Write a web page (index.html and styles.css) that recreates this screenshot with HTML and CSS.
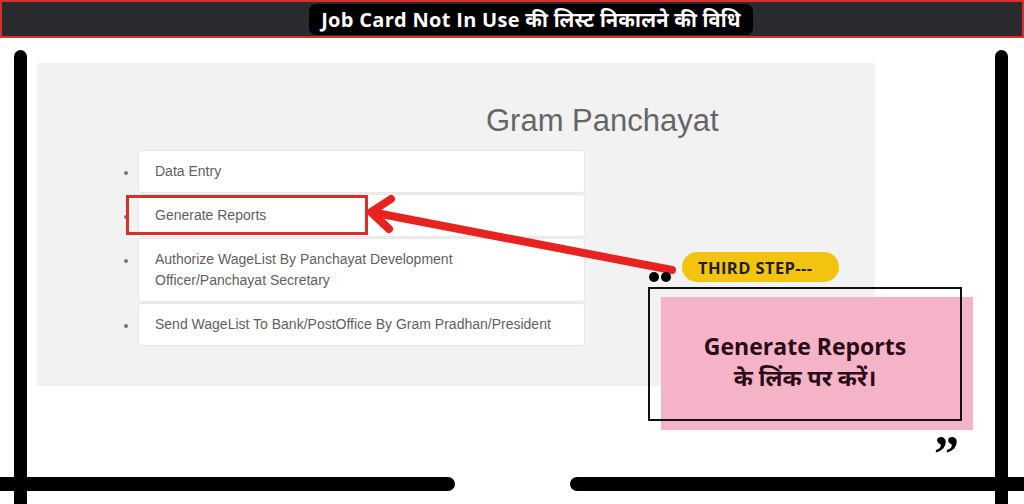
FILE: index.html
```html
<!DOCTYPE html>
<html lang="hi">
<head>
<meta charset="utf-8">
<title>Job Card Not In Use</title>
<link rel="stylesheet" href="styles.css">
</head>
<body>
<header class="topbar">
  <h1 class="title-pill">Job Card Not In Use की लिस्ट निकालने की विधि</h1>
</header>
<main class="stage">
  <section class="panel">
    <h2 class="panel-title">Gram Panchayat</h2>
    <ul class="menu">
      <li class="menu-item">Data Entry</li>
      <li class="menu-item">Generate Reports</li>
      <li class="menu-item">Authorize WageList By Panchayat Development<br>Officer/Panchayat Secretary</li>
      <li class="menu-item">Send WageList To Bank/PostOffice By Gram Pradhan/President</li>
    </ul>
  </section>
</main>

<div class="frame frame-left"></div>
<div class="frame frame-right"></div>
<div class="frame frame-bottom-left"></div>
<div class="frame frame-bottom-right"></div>

<div class="highlight"></div>

<svg class="arrow" width="1024" height="504" viewBox="0 0 1024 504" aria-hidden="true">
  <g stroke="#e8231f" stroke-width="8" stroke-linecap="round" stroke-linejoin="round" fill="none">
    <line x1="672" y1="270" x2="376" y2="213"/>
    <polyline points="391,199 371,212 389,229"/>
  </g>
  <circle cx="654" cy="277" r="5" fill="#000"/>
  <circle cx="666" cy="277" r="5" fill="#000"/>
</svg>

<div class="step-pill">THIRD STEP---</div>

<div class="callout-bg"></div>
<div class="callout">
  <p class="callout-text">Generate Reports<br>के लिंक पर करें।</p>
</div>
<span class="close-quote">”</span>
</body>
</html>
```

FILE: styles.css
```css
html, body {
  margin: 0;
  padding: 0;
}
body {
  width: 1024px;
  height: 504px;
  overflow: hidden;
  position: relative;
  background: #ffffff;
  font-family: "Liberation Sans", Arial, sans-serif;
}

.topbar {
  box-sizing: border-box;
  height: 38px;
  background: #2b2b2f;
  border: 2px solid #d8312d;
  display: flex;
  align-items: center;
  justify-content: center;
  padding-left: 38px;
}
.title-pill {
  margin: 0;
  height: 31px;
  display: flex;
  align-items: center;
  padding: 0 12px;
  background: #000000;
  border-radius: 7px;
  color: #ffffff;
  font-family: "Open Sans", "Noto Sans", "Noto Sans Devanagari", sans-serif;
  font-weight: 700;
  font-size: 20px;
  letter-spacing: 0.3px;
  white-space: nowrap;
}

.stage {
  padding-top: 25px;
}
.panel {
  margin-left: 37px;
  width: 838px;
  height: 323px;
  background: #f2f2f3;
  box-sizing: border-box;
  padding-top: 40px;
}
.panel-title {
  margin: 0;
  padding-left: 449px;
  font-weight: 400;
  font-size: 31px;
  line-height: 36px;
  color: #666666;
}
.menu {
  margin: 11px 0 0;
  padding: 0 0 0 101px;
  list-style: disc outside;
  color: #666666;
}
.menu-item {
  box-sizing: border-box;
  width: 447px;
  margin-bottom: 1px;
  padding: 10px 12px 10px 16px;
  background: #ffffff;
  border: 1px solid #e6e6e6;
  border-radius: 3px;
  font-size: 14px;
  line-height: 21px;
  color: #5f5f5f;
}
.menu-item::marker {
  color: #777777;
  font-size: 12px;
}

.frame {
  position: absolute;
  background: #000000;
}
.frame-left {
  left: 14px;
  top: 50px;
  width: 13px;
  height: 470px;
  border-radius: 7px 7px 0 0;
}
.frame-right {
  left: 995px;
  top: 50px;
  width: 13px;
  height: 470px;
  border-radius: 7px 7px 0 0;
}
.frame-bottom-left {
  left: 0;
  top: 477px;
  width: 455px;
  height: 14px;
  border-radius: 0 7px 7px 0;
}
.frame-bottom-right {
  left: 570px;
  top: 477px;
  width: 470px;
  height: 14px;
  border-radius: 7px 0 0 7px;
}

.highlight {
  position: absolute;
  left: 126px;
  top: 195px;
  width: 242px;
  height: 40px;
  box-sizing: border-box;
  border: 3px solid #d6302c;
}

.arrow {
  position: absolute;
  left: 0;
  top: 0;
  pointer-events: none;
}

.step-pill {
  position: absolute;
  left: 682px;
  top: 252px;
  width: 157px;
  height: 30px;
  box-sizing: border-box;
  padding-left: 16px;
  display: flex;
  align-items: center;
  background: #f3c40f;
  border-radius: 15px;
  color: #1f1f1f;
  font-family: "Open Sans", "Noto Sans", sans-serif;
  font-weight: 700;
  font-size: 16.5px;
  letter-spacing: 0.4px;
}

.callout-bg {
  position: absolute;
  left: 661px;
  top: 297px;
  width: 312px;
  height: 133px;
  background: #f5b3c8;
}
.callout {
  position: absolute;
  left: 648px;
  top: 287px;
  width: 314px;
  height: 134px;
  box-sizing: border-box;
  border: 2px solid #111111;
  padding-top: 15px;
  display: flex;
  align-items: center;
  justify-content: center;
}
.callout-text {
  margin: 0;
  text-align: center;
  color: #2a0c16;
  font-family: "Open Sans", "Noto Sans", "Noto Sans Devanagari", sans-serif;
  font-weight: 700;
  font-size: 23px;
  line-height: 31px;
}

.close-quote {
  position: absolute;
  left: 934px;
  top: 428px;
  font-family: "Liberation Serif", "Times New Roman", serif;
  font-weight: 700;
  font-size: 50px;
  line-height: 50px;
  color: #000000;
}
```
